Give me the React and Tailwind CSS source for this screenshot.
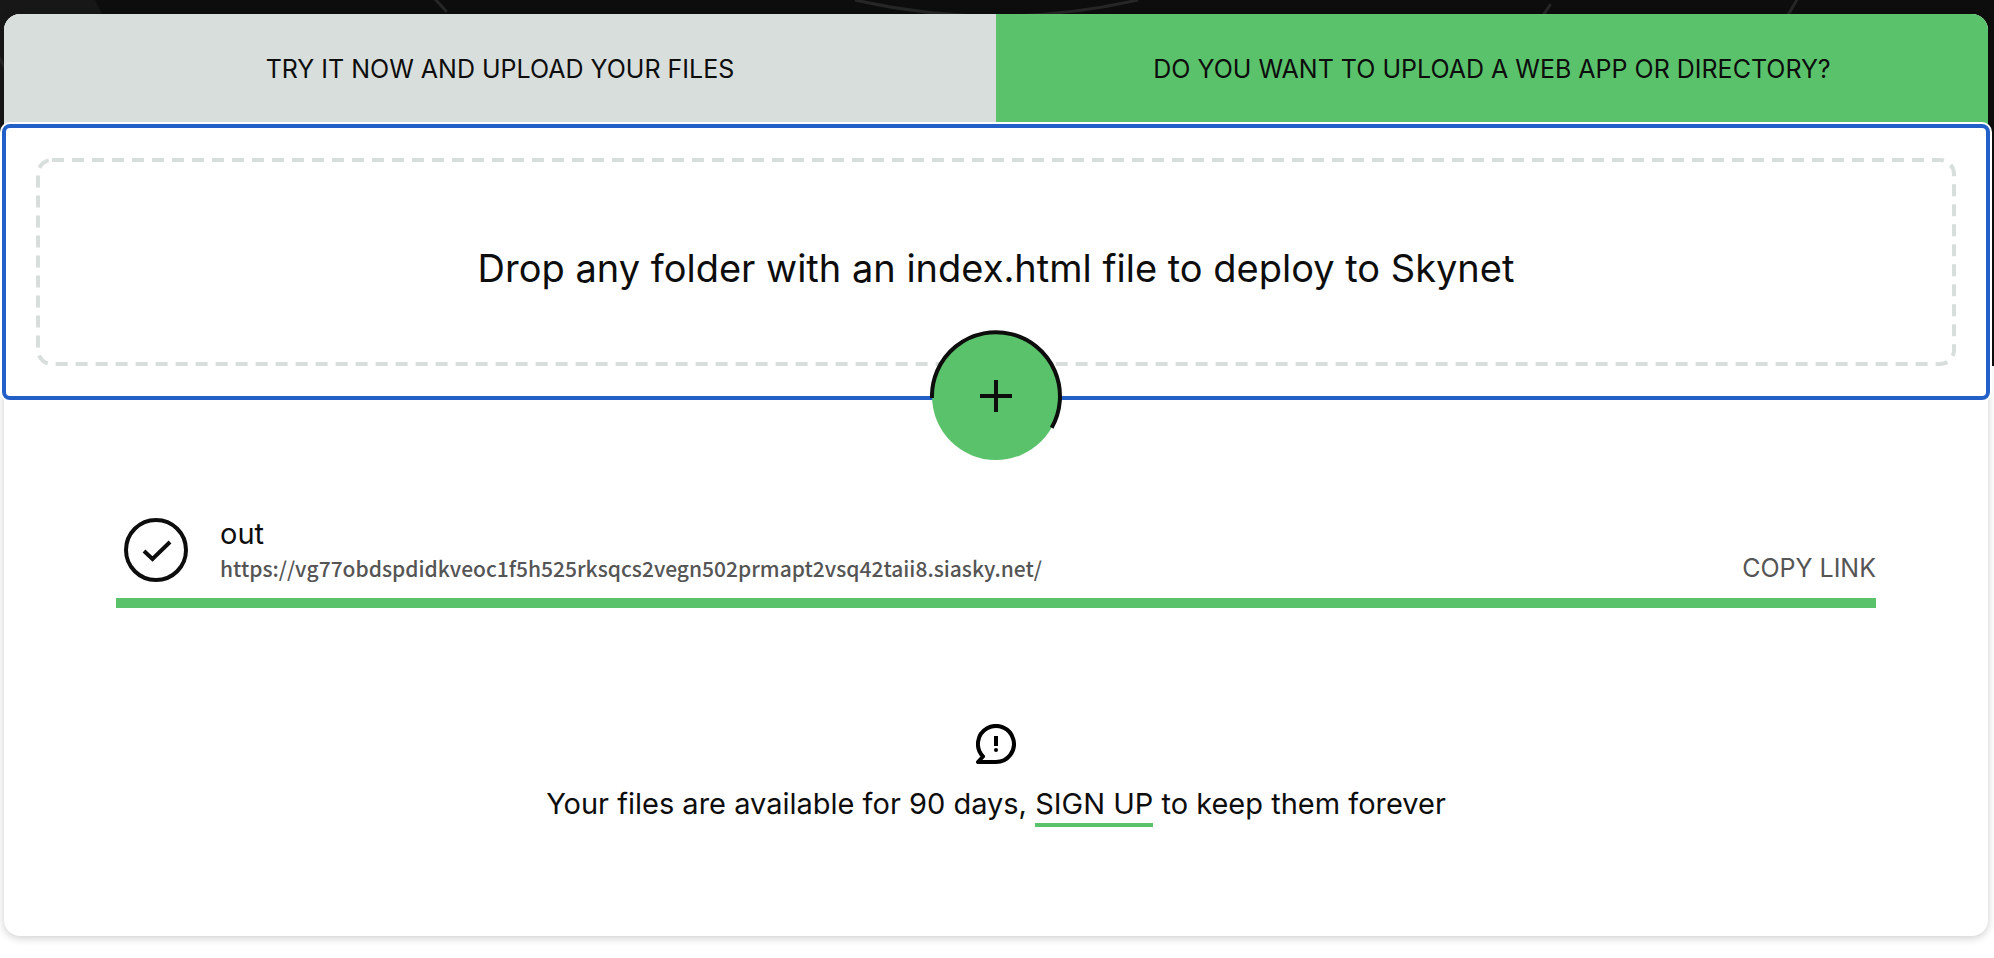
import React from "react";

function Backdrop() {
  return (
    <div className="absolute inset-x-0 top-0 h-[366px] overflow-hidden bg-[#0d0d0d]" aria-hidden="true">
      <svg width="1994" height="366" fill="none" stroke="#262626" strokeWidth="3">
        <path d="M0 0H95L110 30V366H0Z" fill="#171717" stroke="none" />
        <path d="M0 130H4V366H0Z" fill="#11120f" stroke="none" />
        <path d="M435 -1L446 11" strokeLinecap="round" />
        <path d="M855 0Q996 32 1138 0" />
        <path d="M1550 5L1542 17" strokeLinecap="round" />
        <path d="M1798 -2L1788 15" />
        <path d="M-1 57L5 68" />
      </svg>
    </div>
  );
}

function DropZone() {
  return (
    <div
      tabIndex={0}
      className="relative rounded-md bg-white p-8 shadow-[0_0_0_4px_#fff] outline-4 -outline-offset-2 outline-[#2260c8]"
    >
      <div className="relative flex h-52 items-center justify-center pt-3">
        <svg className="absolute inset-0 h-full w-full" fill="none" aria-hidden="true">
          <rect
            x="2"
            y="2"
            rx="14"
            className="h-[calc(100%-4px)] w-[calc(100%-4px)]"
            stroke="#d8dedc"
            strokeWidth="4"
            strokeDasharray="12 8"
          />
        </svg>
        <p className="relative text-[38px] leading-[48px]">
          Drop any folder with an index.html file to deploy to Skynet
        </p>
      </div>
      <button
        type="button"
        aria-label="Add files"
        className="absolute -bottom-16 left-1/2 h-[132px] w-[132px] -translate-x-1/2"
      >
        <svg viewBox="0 0 132 132" className="h-full w-full" fill="none" stroke="#0d0d0d" strokeWidth="4">
          <circle cx="66" cy="66" r="64" fill="#5ac26b" stroke="none" />
          <path d="M2 68A64 64 0 1 1 121.7 97.7" />
          <path d="M66 50V82M50 66H82" />
        </svg>
      </button>
    </div>
  );
}

function UploadedFile() {
  return (
    <section className="mx-28 mt-[116px]">
      <div className="flex h-[84px] items-start pl-2">
        <svg width="64" height="64" viewBox="0 0 64 64" className="mt-1 shrink-0" fill="none" stroke="#0d0d0d" strokeWidth="4" aria-hidden="true">
          <circle cx="32" cy="32" r="30" />
          <path d="M20 33L28.5 41L46 24" />
        </svg>
        <div className="ml-8 flex flex-1 items-end justify-between pt-[2px]">
          <div className="flex flex-col">
            <span className="text-[29px] leading-9">out</span>
            <a
              href="https://vg77obdspdidkveoc1f5h525rksqcs2vegn502prmapt2vsq42taii8.siasky.net/"
              className="font-['Noto_Sans_CJK_SC',sans-serif] text-[21px] leading-8 font-medium text-[#555]"
            >
              https://vg77obdspdidkveoc1f5h525rksqcs2vegn502prmapt2vsq42taii8.siasky.net/
            </a>
          </div>
          <button type="button" className="text-[25px] leading-8 text-[#555]">COPY LINK</button>
        </div>
      </div>
      <div className="h-[10px] bg-[#5ac26b]" />
    </section>
  );
}

function Notice() {
  return (
    <section className="mt-[116px] flex flex-col items-center pb-28">
      <svg width="40" height="40" viewBox="0 0 40 40" fill="none" stroke="#000" strokeWidth="4" aria-hidden="true">
        <path d="M20 38A18 18 0 1 0 7 32.5L2 38Z" strokeLinejoin="round" />
        <path d="M20 12V22" />
        <circle cx="20" cy="26" r="2" fill="#000" stroke="none" />
      </svg>
      <p className="mt-5 text-[29px] leading-10">
        Your files are available for 90 days,{" "}
        <a href="#signup" className="border-b-4 border-[#5ac26b] pb-[2px]">SIGN UP</a> to keep them forever
      </p>
    </section>
  );
}

export default function App() {
  return (
    <main className="relative pt-[14px] pr-[6px] pb-[22px] pl-1 font-['Inter',sans-serif] text-[#0d0d0d]">
      <Backdrop />
      <div className="relative rounded-2xl bg-white shadow-[0_2px_8px_rgba(0,0,0,0.2)]">
        <div className="grid h-28 grid-cols-2 text-[25px]">
          <button type="button" className="rounded-tl-2xl bg-[#d8dedc]">
            TRY IT NOW AND UPLOAD YOUR FILES
          </button>
          <button type="button" className="rounded-tr-2xl bg-[#5ac26b]">
            DO YOU WANT TO UPLOAD A WEB APP OR DIRECTORY?
          </button>
        </div>
        <DropZone />
        <UploadedFile />
        <Notice />
      </div>
    </main>
  );
}
